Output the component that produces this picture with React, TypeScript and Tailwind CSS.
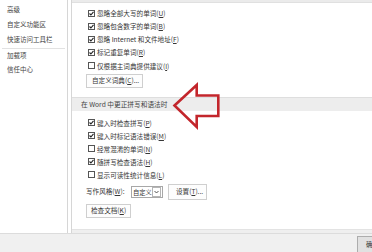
import React from 'react';

const font = { fontFamily: '"Noto Sans CJK SC", "Noto Sans", sans-serif' };

interface CheckRowProps {
  checked: boolean;
  label: React.ReactNode;
}

const CheckBox: React.FC<{ checked: boolean }> = ({ checked }) => (
  <svg width="7" height="7" viewBox="0 0 7 7" className="shrink-0">
    <rect x="0.5" y="0.5" width="6" height="6" fill="#fff" stroke="#555" strokeWidth="1" />
    {checked && (
      <path d="M1.5 3.5 L2.9 5 L5.5 1.8" fill="none" stroke="#222" strokeWidth="1.1" />
    )}
  </svg>
);

const CheckRow: React.FC<CheckRowProps & { h: string }> = ({ checked, label, h }) => (
  <div className={`flex items-center pl-[16px] ${h}`}>
    <CheckBox checked={checked} />
    <span className="ml-[2px] text-[6.6px] leading-none text-[#363636] whitespace-nowrap">{label}</span>
  </div>
);

const navItems = ['高级', '自定义功能区', '快速访问工具栏'];
const navItems2 = ['加载项', '信任中心'];

export default function App() {
  return (
    <div className="relative w-[372px] h-[252px] bg-[#f0f0f0] flex flex-col overflow-hidden" style={font}>
      {/* Upper area */}
      <div className="h-[233px] flex bg-white shrink-0">
        {/* Sidebar */}
        <div className="w-[68px] border-r border-[#d6d6d6] pt-[2.5px]">
          {navItems.map((n) => (
            <div key={n} className="h-[15px] flex items-center pl-[7px] text-[6.5px] text-[#444] whitespace-nowrap">{n}</div>
          ))}
          <div className="h-px bg-[#e2e2e2] mx-[2px]" />
          <div className="h-[14px] flex items-center pl-[7px] text-[6.5px] text-[#444]">{navItems2[0]}</div>
          <div className="h-[15px] flex items-center pl-[7px] text-[6.5px] text-[#444]">{navItems2[1]}</div>
        </div>
        <div className="w-[3px]" />
        {/* Content */}
        <div className="flex-1 border-l border-[#d6d6d6] flex flex-col">
          <div className="h-[3px] bg-[#ebebeb] border-b border-[#e0e0e0]" />
          <div className="pt-[3.5px]">
            <CheckRow h="h-[13.2px]" checked label={<>忽略全部大写的单词(<u>U</u>)</>} />
            <CheckRow h="h-[13.2px]" checked label={<>忽略包含数字的单词(<u>B</u>)</>} />
            <CheckRow h="h-[13.2px]" checked label={<>忽略 Internet 和文件地址(<u>F</u>)</>} />
            <CheckRow h="h-[13.2px]" checked label={<>标记重复单词(<u>R</u>)</>} />
            <CheckRow h="h-[13.2px]" checked={false} label={<>仅根据主词典提供建议(<u>I</u>)</>} />
          </div>
          <div className="mt-[1.5px] ml-[14px] w-[57px] h-[14px] border border-[#cfcfcf] bg-[#fdfdfd] flex items-center pl-[5px] text-[6.6px] text-[#363636] whitespace-nowrap">
            自定义词典(<u>C</u>)...
          </div>
          <div className="mt-[9px] h-[14px] bg-[#ededed] border-t border-[#dedede] flex items-center pl-[9px] text-[6.7px] text-[#444] whitespace-nowrap">
            在 Word 中更正拼写和语法时
          </div>
          <div className="pt-[5.5px]">
            <CheckRow h="h-[13px]" checked label={<>键入时检查拼写(<u>P</u>)</>} />
            <CheckRow h="h-[13px]" checked label={<>键入时标记语法错误(<u>M</u>)</>} />
            <CheckRow h="h-[13px]" checked={false} label={<>经常混淆的单词(<u>N</u>)</>} />
            <CheckRow h="h-[13px]" checked label={<>随拼写检查语法(<u>H</u>)</>} />
            <CheckRow h="h-[13px]" checked={false} label={<>显示可读性统计信息(<u>L</u>)</>} />
          </div>
          <div className="mt-[2.5px] h-[17px] flex items-center pl-[14px]">
            <span className="text-[6.6px] text-[#363636] whitespace-nowrap w-[45px]">写作风格(<u>W</u>):</span>
            <div className="w-[32px] h-[12px] border border-[#a8a8a8] bg-white flex items-center">
              <span className="w-[20px] pl-[1px] text-[6.3px] text-[#363636] whitespace-nowrap overflow-hidden">自定义</span>
              <div className="w-[9px] h-[10px] border border-[#b5b5b5] flex items-center justify-center">
                <svg width="5" height="4" viewBox="0 0 5 4">
                  <path d="M0.5 1 L2.5 3 L4.5 1" fill="none" stroke="#444" strokeWidth="0.9" />
                </svg>
              </div>
            </div>
            <div className="ml-[5px] w-[39px] h-[16px] border border-[#cfcfcf] bg-[#fdfdfd] flex items-center pl-[7px] text-[6.6px] text-[#363636] whitespace-nowrap">
              设置(<u>T</u>)...
            </div>
          </div>
          <div className="mt-[3px] ml-[14px] w-[45px] h-[14px] border border-[#cfcfcf] bg-[#fdfdfd] flex items-center pl-[4px] text-[6.6px] text-[#363636] whitespace-nowrap">
            检查文档(<u>K</u>)
          </div>
          <div className="mt-auto h-[4px] bg-[#efefef] border-t border-[#e3e3e3]" />
        </div>
      </div>
      {/* Bottom bar */}
      <div className="flex-1 border-t border-[#dcdcdc] flex pl-[357px] pt-[2px]">
        <div className="w-[40px] h-[18px] border border-[#adadad] bg-[#e1e1e1] flex items-center pl-[8px] text-[6.5px] text-[#333] whitespace-nowrap shrink-0">
          确定
        </div>
      </div>
      {/* Red annotation arrow */}
      <svg className="absolute left-[165px] top-[78px]" width="62" height="54" viewBox="165 78 62 54">
        <path
          d="M174.5 105.5 L196.7 85 L196.7 95.5 L218.3 95.5 L218.3 116 L196.7 116 L196.7 127 Z"
          fill="none"
          stroke="#c3262c"
          strokeWidth="2.6"
          strokeLinejoin="miter"
        />
      </svg>
    </div>
  );
}
